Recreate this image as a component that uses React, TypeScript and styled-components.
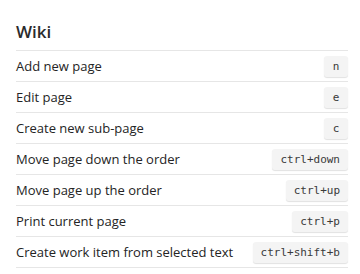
import React from "react";
import styled, { createGlobalStyle } from "styled-components";

const Global = createGlobalStyle`
  html, body { margin: 0; padding: 0; background: #ffffff; }
  body { font-family: "Open Sans", "Noto Sans", sans-serif; color: #242424; }
`;

const Panel = styled.div`
  width: 332px;
  padding: 0 12px 0 16px;
  box-sizing: content-box;
`;

const Title = styled.h2`
  margin: 0;
  height: 51px;
  display: flex;
  align-items: flex-end;
  padding-bottom: 8px;
  box-sizing: border-box;
  font-size: 17px;
  line-height: 20px;
  font-weight: 600;
  color: #2b2b2b;
  border-bottom: 1px solid #e6e6e6;
`;

const List = styled.ul`
  list-style: none;
  margin: 0;
  padding: 0;
`;

const Row = styled.li`
  height: 31px;
  box-sizing: border-box;
  display: flex;
  align-items: center;
  justify-content: space-between;
  border-bottom: 1px solid #e6e6e6;
  font-size: 13px;
`;

const Key = styled.kbd`
  font-family: "DejaVu Sans Mono", "Liberation Mono", monospace;
  font-size: 11px;
  height: 21px;
  min-width: 24px;
  box-sizing: border-box;
  padding: 0 8px;
  display: inline-flex;
  align-items: center;
  justify-content: center;
  background: #f4f4f4;
  color: #3a3a3a;
  border-radius: 3px;
  box-shadow: 0 1px 1px rgba(0, 0, 0, 0.12);
`;

const items: [string, string][] = [
  ["Add new page", "n"],
  ["Edit page", "e"],
  ["Create new sub-page", "c"],
  ["Move page down the order", "ctrl+down"],
  ["Move page up the order", "ctrl+up"],
  ["Print current page", "ctrl+p"],
  ["Create work item from selected text", "ctrl+shift+b"],
];

export default function App() {
  return (
    <>
      <Global />
      <Panel>
        <Title>Wiki</Title>
        <List>
          {items.map(([label, key]) => (
            <Row key={label}>
              <span>{label}</span>
              <Key>{key}</Key>
            </Row>
          ))}
        </List>
      </Panel>
    </>
  );
}
